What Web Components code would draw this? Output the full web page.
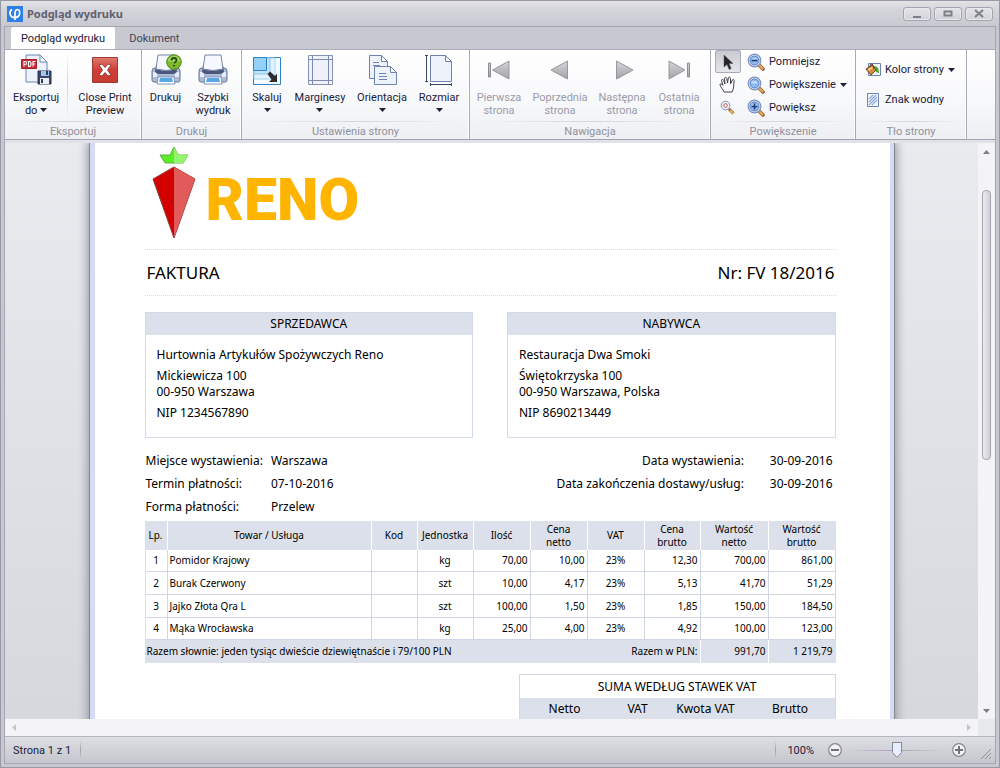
<!DOCTYPE html>
<html lang="pl">
<head>
<meta charset="utf-8">
<title>Podgląd wydruku</title>
<style>
html, body { margin: 0; height: 100%; }
body { font: 11px/13px Roboto, "Noto Sans", sans-serif; color: #20203a; }
</style>
</head>
<body>
<preview-window></preview-window>

<script>
const define = (name, html, setup) => {
  const template = document.createElement('template');
  template.innerHTML = html;
  customElements.define(name, class extends HTMLElement {
    connectedCallback() {
      if (this.shadowRoot) return;
      this.attachShadow({ mode: 'open' }).append(template.content.cloneNode(true));
      if (setup) setup(this, this.shadowRoot);
    }
  });
};

const page = 'fill="#eef2fb" stroke="#6d83b5"';
const lens = sign => `<svg width="18" height="18" viewBox="0 0 18 18"><path d="M11 11l5 5" stroke="#8a5a3c" stroke-width="3.6" stroke-linecap="round"/><path d="M12.5 12.500l3 3" stroke="#f0a64c" stroke-width="2.200" stroke-linecap="round"/><circle cx="7.500" cy="7.500" r="6.300" fill="#dbe6f6" stroke="#7c93c0" stroke-width="1.200"/><circle cx="7.500" cy="7.500" r="4.500" fill="#8fb8ee" stroke="#5e83c4"/><path d="M4 7a4 4 0 0 1 7 0q-3 1-7 0z" fill="#c5dcf8"/>${sign}</svg>`;
const printer = `<path d="M2 17q0-3 3-3h22q3 0 3 3v9q0 2-2 2H4q-2 0-2-2z" fill="#aebbd4" stroke="#66759a"/><path d="M3 18h4v5H3zM25 18h4v5h-4z" fill="#e7edf8"/><path d="M6 11h20l1 7q-2 2-4 2H9q-2 0-4-2z" fill="#4b587c"/><path d="M8 1h16l2 14q-10 3-20 0z" fill="#f5f8fe" stroke="#7585ab"/><path d="M8 23h16l1 7H7z" fill="#fff" stroke="#7c93c0"/><path d="M10 24h12l1 4H9z" fill="#58a8e4"/>`;
const big = body => `<svg width="32" height="32" viewBox="0 0 32 32">${body}</svg>`;
const metal = '<defs><linearGradient id="m" x2="0" y2="1"><stop stop-color="#d6d6d9"/><stop offset="1" stop-color="#a2a2a7"/></linearGradient></defs>';
const icons = {
  app: '<svg width="16" height="16" viewBox="0 0 16 16"><path d="M0 0h16v16H0z" fill="#2d7fe6"/><path d="M5 3.500C1.500 5.500 2.500 11.500 8 11.500s6-8 2.500-8c-2 0-2.500 2-2.500 4.500v6" fill="none" stroke="#fff" stroke-width="1.700"/></svg>',
  export: big(`<path d="M6 1h14l7 7v20H6z" ${page}/><path d="M20 1v7h7z" fill="#fff" stroke="#6d83b5"/><path d="M1.500 5.500h15v9h-15z" fill="#c9303a" stroke="#a51f2a"/><path d="M4 12.500v-5h1.500q1 0 1 1.500t-1 1.500H4M8.500 7.500v5h1q1.500 0 1.500-2.500T9.500 7.500zM13 12.500v-5h2.500M13 10h2" fill="none" stroke="#fff" stroke-width="1.100"/><path d="M18 17h13v13H18z" fill="#3d4763" stroke="#2b3450"/><path d="M21 17h8v5h-8z" fill="#9fc7ef"/><path d="M20 24h9v6h-9z" fill="#edf1f7"/><path d="M21 25h2v4h-2z" fill="#333d58"/><path d="M26 17h2v4h-2z" fill="#333d58"/>`),
  close: big('<defs><linearGradient id="r" x2="0" y2="1"><stop stop-color="#e07a6e"/><stop offset=".5" stop-color="#cf3f35"/><stop offset="1" stop-color="#c73c33"/></linearGradient></defs><path d="M3.500 3.500h25v25h-25z" fill="url(#r)" stroke="#a03a36"/><path d="M10 11l3-1 3 3.500 3-3.500 3 1-3.500 5 3.500 5-3 1-3-3.500-3 3.500-3-1 3.500-5z" fill="#fff" stroke="#8c2522" stroke-width=".8"/>'),
  printAsk: big(printer + '<circle cx="24" cy="8" r="7.300" fill="#7cba2a" stroke="#4d8a1e"/><path d="M18 7a6 5 0 0 1 12 0q-6 2-12 0z" fill="#a9d65f"/><path d="M21.500 6.500q0-2.500 2.500-2.500t2.500 2.200q0 1.300-2.500 2.800M24 11v1.500" fill="none" stroke="#234d10" stroke-width="1.800"/>'),
  print: big(printer),
  scale: big('<path d="M2.500 3.500h27v27h-27z" fill="#f2faff" stroke="#2d83c4"/><path d="M3 4h21v21H3z" fill="#e2f3fd" stroke="#a5d4f0"/><path d="M3 4h16v16H3z" fill="#bfe3fa" stroke="#8cc6ec"/><path d="M2.500 3.500h13v13h-13z" fill="#93d0fa" stroke="#2d83c4"/><path d="M16.500 20l2.500-2.500 5 4.500 2-2.500V28h-8l2.500-2.500z" fill="#2c2c31"/>'),
  margins: big('<path d="M4.500 1.500h24v29h-24z" fill="#eef1f8" stroke="#8793b4"/><path d="M8.500 1v30M24.500 1v30M4 5.500h25M4 26.500h25" fill="none" stroke="#7d8bb0"/>'),
  orient: big(`<path d="M3.500 1.500h12l6 6v17h-18z" ${page}/><path d="M15.500 1.500v6h6z" fill="#fff" stroke="#6d83b5"/><path d="M7 8.500h6M7 11.500h7" stroke="#6d83b5"/><path d="M8.500 12.500h16l6 6v12h-22z" ${page}/><path d="M24.500 12.500v6h6z" fill="#fff" stroke="#6d83b5"/><path d="M13 19.500h7M13 22.500h8M13 25.500h8" stroke="#6d83b5"/>`),
  size: big(`<path d="M7.500 1.500h15l6 6v20h-21z" ${page}/><path d="M22.500 1.500v6h6z" fill="#fff" stroke="#6d83b5"/><path d="M3.500 1v27M2 1.500h3M2 27.500h3M7 30.500h22M7.500 29v3M28.500 29v3" stroke="#3f4660" fill="none"/>`),
  first: big(metal + '<path d="M5.500 9h2v14h-2z" fill="url(#m)" stroke="#8e8e94"/><path d="M26 7v18L9.500 16z" fill="url(#m)" stroke="#96969c"/>'),
  prev: big(metal + '<path d="M23.500 7v18L7 16z" fill="url(#m)" stroke="#96969c"/>'),
  next: big(metal + '<path d="M10.500 7v18L27 16z" fill="url(#m)" stroke="#96969c"/>'),
  last: big(metal + '<path d="M6 7v18l16-9z" fill="url(#m)" stroke="#96969c"/><path d="M24.500 9h2v14h-2z" fill="url(#m)" stroke="#8e8e94"/>'),
  pointer: '<svg width="18" height="18" viewBox="0 0 18 18"><path d="M5 2v12l3-2.500 2.200 5 2-1L10 10.500h4z" fill="#26262a" stroke="#55555a" stroke-width=".5"/></svg>',
  hand: '<svg width="18" height="18" viewBox="0 0 18 18"><path d="M5 16c0-2-4-5-4-7.500 0-1 1.500-1 3 1L2.500 4.500c0-1.500 1.700-1.500 2.200 0L6 8 5.500 2.500c0-1.500 2-1.500 2.300 0L8.500 7l.8-5c.3-1.500 2.200-1 2.200.5L11.500 8l1.800-4c.6-1.200 2.200-.5 1.900.8C14.500 9 15 13 13 16z" fill="#fff" stroke="#3e3e44"/></svg>',
  magnify: '<svg width="18" height="18" viewBox="0 0 18 18"><path d="M10 10l4.500 4.500" stroke="#7c5a4a" stroke-width="3"/><path d="M11 11l3.500 3.500" stroke="#f2ae4e" stroke-width="2"/><circle cx="6.500" cy="6.500" r="4.300" fill="#eef4fc" stroke="#7c93c0"/><circle cx="6.500" cy="6.500" r="1.800" fill="#fff" stroke="#c94b45"/></svg>',
  zoomOut: lens('<path d="M4.500 7.500h6" stroke="#1d3a78" stroke-width="1.600"/>'),
  zoom: lens(''),
  zoomIn: lens('<path d="M4.500 7.500h6M7.500 4.500v6" stroke="#1d3a78" stroke-width="1.600"/>'),
  fill: '<svg width="16" height="16" viewBox="0 0 16 16"><path d="M3.500 1.500h12v12h-12z" fill="#f2f6fd" stroke="#6d83b5"/><path d="M9 4q5 0 5 7l-3-1q0-3-2-4z" fill="#55a52c"/><path d="M1 7l6-4 4 5-5 5z" fill="#d88b3c" stroke="#74431f"/><path d="M3 7l4-2 1 1-4 3z" fill="#f7cf95"/><path d="M5 5q0-4 2-3t2 5" fill="none" stroke="#5a4030"/></svg>',
  watermark: '<svg width="16" height="16" viewBox="0 0 16 16"><path d="M2.500 1.500h11v13h-11z" fill="#f2f6fd" stroke="#6d83b5"/><path d="M4 7l4-4M4 10l7-7M4 13l8-8M7 13l5-5" stroke="#8fa9d6" stroke-width="1.200"/></svg>',
  min: '<svg width="12" height="10" viewBox="0 0 12 10"><path d="M2 7h8v2H2z" fill="#7e8089"/></svg>',
  max: '<svg width="12" height="10" viewBox="0 0 12 10"><path d="M2.500 2.500h7v4h-7z" fill="none" stroke="#7e8089" stroke-width="2"/></svg>',
  x: '<svg width="12" height="10" viewBox="0 0 12 10"><path d="M2 1l8 7M10 1L2 8" stroke="#7e8089" stroke-width="2.200"/></svg>',
  minus: '<svg width="14" height="14" viewBox="0 0 14 14"><circle cx="7" cy="7" r="6.300" fill="#f4f4f6" stroke="#83848e" stroke-width="1.200"/><path d="M3 7h8" stroke="#6f707b" stroke-width="2"/></svg>',
  plus: '<svg width="14" height="14" viewBox="0 0 14 14"><circle cx="7" cy="7" r="6.300" fill="#f4f4f6" stroke="#83848e" stroke-width="1.200"/><path d="M3 7h8M7 3v8" stroke="#6f707b" stroke-width="2"/></svg>',
  grip: '<svg width="12" height="12" viewBox="0 0 12 12"><path d="M1 11L11 1M5 11l6-6M9 11l2-2" stroke="#8f909b"/></svg>',
  drop: '<svg width="7" height="4" viewBox="0 0 7 4"><path d="M0 0h7L3.500 4z" fill="#20203a"/></svg>',
  up: '<svg width="7" height="4" viewBox="0 0 7 4"><path d="M0 4h7L3.500 0z" fill="#7b7d88"/></svg>',
  down: '<svg width="7" height="4" viewBox="0 0 7 4"><path d="M0 0h7L3.500 4z" fill="#7b7d88"/></svg>',
  left: '<svg width="4" height="7" viewBox="0 0 4 7"><path d="M4 0v7L0 3.500z" fill="#c4c5ca"/></svg>',
  right: '<svg width="4" height="7" viewBox="0 0 4 7"><path d="M0 0v7l4-3.500z" fill="#c4c5ca"/></svg>',
  carrot: '<svg width="44" height="94" viewBox="0 0 44 94"><path d="M22 1l4 8h10l-5 8H13L8 9h10z" fill="#58ee22" stroke="#67a84a"/><path d="M22 1l4 8h10l-5 8h-9z" fill="#95f46e"/><path d="M22 21l21 12-21 59L1 33z" fill="#d40000" stroke="#8f3a3a"/><path d="M22 21l21 12-21 59z" fill="#e25b5b"/></svg>'
};

define('app-icon', `<style>:host{display:inline-flex;flex:none} svg{display:block}</style>`,
  (host, root) => root.lastElementChild.insertAdjacentHTML('afterend', icons[host.getAttribute('name')]));

define('caption-button', `<style>
  :host{display:block}
  button{display:grid;place-items:center;width:28px;height:14px;padding:0;box-sizing:border-box;border:1px solid #a3a4ae;border-radius:3px;background:linear-gradient(#e4e4e8,#d0d1d7);box-shadow:inset 0 0 0 1px #e8e8ec}
</style><button><app-icon></app-icon></button>`, (host, root) => {
  root.querySelector('button').setAttribute('aria-label', host.getAttribute('label'));
  root.querySelector('app-icon').replaceWith(Object.assign(document.createElement('template'), { innerHTML: `<app-icon name="${host.getAttribute('icon')}"></app-icon>` }).content);
});

define('ribbon-tab', `<style>
  :host{display:block}
  button{height:22px;padding:0 10px;border:0;background:none;font:inherit;color:#45465a}
  :host([selected]) button{background:#fff;color:#20203a;border-radius:2px 2px 0 0}
</style><button role="tab"><slot></slot></button>`);

define('ribbon-group', `<style>
  :host{display:flex;flex-direction:column;box-sizing:border-box;border-right:1px solid #a9abb8;box-shadow:inset -1px 0 #fff}
  .items{flex:1;display:flex}
  .caption{height:17px;line-height:19px;text-align:center;color:#8f909c;border-top:1px solid;border-image:linear-gradient(90deg,transparent 5%,#d3d5dc 50%,transparent 95%) 1}
</style><div class="items"><slot></slot></div><div class="caption"></div>`,
  (host, root) => root.querySelector('.caption').textContent = host.getAttribute('caption'));

define('ribbon-button', `<style>
  :host{display:block;width:var(--w,56px)}
  button{display:flex;flex-direction:column;align-items:center;gap:5px;width:100%;padding:4px 0 0;border:0;background:none;font:inherit;color:inherit;white-space:nowrap}
  button:disabled{color:#9a9ba9}
</style><button><slot name="icon"></slot><span><slot></slot></span></button>`,
  (host, root) => root.querySelector('button').disabled = host.hasAttribute('disabled'));

define('ribbon-row', `<style>
  :host{display:block}
  button{display:flex;align-items:center;gap:4px;height:23px;padding:0;border:0;background:none;font:inherit;color:inherit;white-space:nowrap}
</style><button><slot name="icon"></slot><span><slot></slot></span><slot name="end"></slot></button>`);

define('tool-button', `<style>
  :host{display:block}
  button{display:grid;place-items:center;width:26px;height:23px;box-sizing:border-box;padding:0;border:1px solid transparent;border-radius:2px;background:none}
  :host([pressed]) button{border-color:#a9abb8;background:linear-gradient(#c9cad1,#e6e7ec)}
</style><button><slot></slot></button>`, (host, root) => root.querySelector('button').setAttribute('aria-label', host.getAttribute('label')));

define('print-ribbon', `<style>
  :host{display:block}
  .tabs{display:flex;align-items:flex-end;height:23px;padding-left:6px;gap:4px;background:#c8c8d1;border-top:1px solid #a5a6b2;box-sizing:border-box}
  .bar{display:flex;height:91px;box-sizing:border-box;border-top:1px solid #a9abb8;border-bottom:1px solid #a1a3b1;background:linear-gradient(#fff,#f7f8fa 60%,#eeeff2);overflow:hidden}
  ribbon-group{flex:none}
  .sep{width:1px;height:68px;margin:2px 1px 0 0;background:linear-gradient(transparent,#d0d2da,transparent)}
  .tools{display:grid;align-content:start;padding:0 6px 0 4px}
  .rows{display:grid;align-content:start;padding:0 12px 0 0;gap:0}
  .rows.wide{padding:8px 12px 0 9px;gap:7px}
  .rest{padding-right:4px}
  app-icon[name=drop]{vertical-align:2px}
</style>
<div class="tabs" role="tablist"><ribbon-tab selected>Podgląd wydruku</ribbon-tab><ribbon-tab>Dokument</ribbon-tab></div>
<div class="bar">
  <ribbon-group caption="Eksportuj">
    <ribbon-button style="--w:62px"><app-icon slot="icon" name="export"></app-icon>Eksportuj<br>do <app-icon name="drop"></app-icon></ribbon-button>
    <div class="sep"></div>
    <ribbon-button style="--w:72px"><app-icon slot="icon" name="close"></app-icon>Close Print<br>Preview</ribbon-button>
  </ribbon-group>
  <ribbon-group caption="Drukuj">
    <ribbon-button style="--w:47px"><app-icon slot="icon" name="printAsk"></app-icon>Drukuj</ribbon-button>
    <ribbon-button class="rest" style="--w:48px"><app-icon slot="icon" name="print"></app-icon>Szybki<br>wydruk</ribbon-button>
  </ribbon-group>
  <ribbon-group caption="Ustawienia strony">
    <ribbon-button style="--w:50px"><app-icon slot="icon" name="scale"></app-icon>Skaluj<br><app-icon name="drop"></app-icon></ribbon-button>
    <ribbon-button style="--w:56px"><app-icon slot="icon" name="margins"></app-icon>Marginesy<br><app-icon name="drop"></app-icon></ribbon-button>
    <ribbon-button style="--w:68px"><app-icon slot="icon" name="orient"></app-icon>Orientacja<br><app-icon name="drop"></app-icon></ribbon-button>
    <ribbon-button style="--w:46px;padding-right:7px"><app-icon slot="icon" name="size"></app-icon>Rozmiar<br><app-icon name="drop"></app-icon></ribbon-button>
  </ribbon-group>
  <ribbon-group caption="Nawigacja">
    <ribbon-button disabled style="--w:58px"><app-icon slot="icon" name="first"></app-icon>Pierwsza<br>strona</ribbon-button>
    <ribbon-button disabled style="--w:64px"><app-icon slot="icon" name="prev"></app-icon>Poprzednia<br>strona</ribbon-button>
    <ribbon-button disabled style="--w:60px"><app-icon slot="icon" name="next"></app-icon>Następna<br>strona</ribbon-button>
    <ribbon-button class="rest" disabled style="--w:54px"><app-icon slot="icon" name="last"></app-icon>Ostatnia<br>strona</ribbon-button>
  </ribbon-group>
  <ribbon-group caption="Powiększenie" style="width:145px">
    <div class="tools">
      <tool-button pressed label="Wskaźnik"><app-icon name="pointer"></app-icon></tool-button>
      <tool-button label="Rączka"><app-icon name="hand"></app-icon></tool-button>
      <tool-button label="Lupa"><app-icon name="magnify"></app-icon></tool-button>
    </div>
    <div class="rows">
      <ribbon-row><app-icon slot="icon" name="zoomOut"></app-icon>Pomniejsz</ribbon-row>
      <ribbon-row><app-icon slot="icon" name="zoom"></app-icon>Powiększenie<app-icon slot="end" name="drop"></app-icon></ribbon-row>
      <ribbon-row><app-icon slot="icon" name="zoomIn"></app-icon>Powiększ</ribbon-row>
    </div>
  </ribbon-group>
  <ribbon-group caption="Tło strony" style="width:111px">
    <div class="rows wide">
      <ribbon-row><app-icon slot="icon" name="fill"></app-icon>Kolor strony<app-icon slot="end" name="drop"></app-icon></ribbon-row>
      <ribbon-row><app-icon slot="icon" name="watermark"></app-icon>Znak wodny</ribbon-row>
    </div>
  </ribbon-group>
</div>`);

define('party-card', `<style>
  :host{display:block;flex:1;box-sizing:border-box;height:126px;border:1px solid #d2d9e8}
  h2{margin:0;height:22px;font:inherit;line-height:22px;text-align:center;background:#dce0ea}
  div{padding:12px 11px 0;line-height:16px}
  ::slotted(p){margin:0 0 5px}
</style><h2></h2><div><slot></slot></div>`,
  (host, root) => root.querySelector('h2').textContent = host.getAttribute('heading'));

define('invoice-items', `<style>
  :host{display:block;font-size:10px;line-height:13px}
  table{width:100%;table-layout:fixed;border-collapse:separate;border-spacing:0}
  th,td{box-sizing:border-box;padding:0 2px;font-weight:400;border-right:1px solid #cfd6e6;white-space:nowrap}
  th{height:29px;background:#dce0ea;border-right-color:#fff;padding:0}
  tbody td{height:23px;border-bottom:1px solid #cfd6e6;text-align:right}
  tbody tr:first-child td,tbody tr:last-child td{height:22px}
  tbody td:first-child{border-left:1px solid #dce0ea}
  td.c{text-align:center} td.l{text-align:left}
  tfoot td{height:23px;background:#dce0ea;border-right-color:#fff;text-align:right}
  tfoot td.l{border-right:0}
  th:last-child,tfoot td:last-child{border-right-color:#dce0ea}
</style>
<table>
<colgroup><col style="width:23px"><col style="width:204px"><col style="width:46px"><col style="width:56px"><col style="width:57px"><col style="width:57px"><col style="width:57px"><col style="width:56px"><col style="width:68px"><col style="width:67px"></colgroup>
<thead><tr><th>Lp.</th><th>Towar / Usługa</th><th>Kod</th><th>Jednostka</th><th>Ilość</th><th>Cena<br>netto</th><th>VAT</th><th>Cena<br>brutto</th><th>Wartość<br>netto</th><th>Wartość<br>brutto</th></tr></thead>
<tbody></tbody>
<tfoot><tr><td class="l" colspan="5">Razem słownie: jeden tysiąc dwieście dziewiętnaście i 79/100 PLN</td><td colspan="3">Razem w PLN:</td><td>991,70</td><td>1 219,79</td></tr></tfoot>
</table>`, (host, root) => {
  const kinds = ['c', 'l', 'c', 'c', '', '', 'c', '', '', ''];
  root.querySelector('tbody').innerHTML = [
    ['1', 'Pomidor Krajowy', '', 'kg', '70,00', '10,00', '23%', '12,30', '700,00', '861,00'],
    ['2', 'Burak Czerwony', '', 'szt', '10,00', '4,17', '23%', '5,13', '41,70', '51,29'],
    ['3', 'Jajko Złota Qra L', '', 'szt', '100,00', '1,50', '23%', '1,85', '150,00', '184,50'],
    ['4', 'Mąka Wrocławska', '', 'kg', '25,00', '4,00', '23%', '4,92', '100,00', '123,00']
  ].map(row => `<tr>${row.map((v, i) => `<td class="${kinds[i]}">${v}</td>`).join('')}</tr>`).join('');
});

define('vat-summary', `<style>
  :host{display:block;width:317px;margin-left:auto}
  table{width:100%;table-layout:fixed;border-spacing:0;border:solid #cfd6e6;border-width:0 1px 1px}
  caption{box-sizing:border-box;height:24px;line-height:24px;border:1px solid #cfd6e6;border-bottom:0}
  th{height:22px;padding:0;font-weight:400;background:#dce0ea}
</style><table><caption>SUMA WEDŁUG STAWEK VAT</caption><colgroup><col style="width:90px"><col style="width:56px"><col style="width:80px"><col style="width:89px"></colgroup>
<tr><th>Netto</th><th>VAT</th><th>Kwota VAT</th><th>Brutto</th></tr></table>`);

define('invoice-page', `<style>
  :host{display:block;box-sizing:border-box;width:100%;max-width:804px;height:1000px;margin:0 auto;padding:3px 54px 0 50px;background:#fff;border:solid #d4dbf6;border-width:0 4px 0 5px;font-family:"Noto Sans","Open Sans",sans-serif;font-size:12px;line-height:16px;color:#000;box-shadow:0 0 0 1px #85868f,0 0 10px 2px #8e8f98}
  .logo{display:flex;align-items:center;gap:10px;height:103px;box-sizing:border-box;padding:0 0 9px 7px}
  .logo b{font:900 59px/60px Roboto,sans-serif;color:#ffb400;padding-top:14px}
  .title{display:flex;justify-content:space-between;align-items:center;height:47px;box-sizing:border-box;padding:0 1px 0 2px;border:dotted #d3d8e8;border-width:1px 0;font-size:17px}
  .parties{display:flex;gap:34px;margin-top:16px}
  .facts{display:flex;justify-content:space-between;height:72px;margin:11px 0 0;padding:0 3px 0 1px}
  dl{display:grid;grid-template-columns:auto auto;grid-auto-rows:23px;line-height:23px;margin:0}
  .place{column-gap:8px}
  .dates{column-gap:26px}
  .dates dt{text-align:right}
  dd{margin:0}
  vat-summary{margin-top:11px}
</style>
<div class="logo"><app-icon name="carrot"></app-icon><b>RENO</b></div>
<div class="title"><span>FAKTURA</span><span>Nr: FV 18/2016</span></div>
<div class="parties">
  <party-card heading="SPRZEDAWCA"><p>Hurtownia Artykułów Spożywczych Reno</p><p>Mickiewicza 100<br>00-950 Warszawa</p><p>NIP 1234567890</p></party-card>
  <party-card heading="NABYWCA"><p>Restauracja Dwa Smoki</p><p>Świętokrzyska 100<br>00-950 Warszawa, Polska</p><p>NIP 8690213449</p></party-card>
</div>
<div class="facts">
  <dl class="place"><dt>Miejsce wystawienia:</dt><dd>Warszawa</dd><dt>Termin płatności:</dt><dd>07-10-2016</dd><dt>Forma płatności:</dt><dd>Przelew</dd></dl>
  <dl class="dates"><dt>Data wystawienia:</dt><dd>30-09-2016</dd><dt>Data zakończenia dostawy/usług:</dt><dd>30-09-2016</dd></dl>
</div>
<invoice-items></invoice-items>
<vat-summary></vat-summary>`);

define('document-view', `<style>
  :host{flex:1;min-height:0;display:grid;grid-template:minmax(0,1fr) 17px / minmax(0,1fr) 17px;border-top:3px solid #e1e2e7;background:#e8e9ed}
  .canvas{overflow:hidden;background:linear-gradient(#eaebef,#d7d8de)}
  .v{display:flex;flex-direction:column;align-items:center;background:#f4f4f6;padding:7px 0 6px;box-sizing:border-box}
  .track{flex:1;min-height:0;width:9px;padding:36px 0 0;box-sizing:border-box}
  .thumb{height:52%;box-sizing:border-box;border:1px solid #a4a5ae;border-radius:4px;background:linear-gradient(90deg,#ececf0,#cfd0d6)}
  .h{display:flex;justify-content:space-between;align-items:center;padding:0 7px;background:#f4f4f6}
</style><div class="canvas"><slot></slot></div>
<div class="v"><app-icon name="up"></app-icon><div class="track"><div class="thumb"></div></div><app-icon name="down"></app-icon></div>
<div class="h"><app-icon name="left"></app-icon><app-icon name="right"></app-icon></div>`);

define('status-bar', `<style>
  :host{display:flex;align-items:center;height:27px;box-sizing:border-box;border-top:1px solid #b4b5bf;background:linear-gradient(#dddee3,#c6c7ce);padding:0 3px 0 8px}
  .sep{width:1px;height:18px;background:linear-gradient(transparent,#9c9da7,transparent)}
  .page{padding-right:9px}
  .zoom{display:flex;align-items:center;margin-left:auto}
  label{padding:0 14px 0 11px}
  button{padding:0;border:0;background:none;display:flex}
  input{-webkit-appearance:none;appearance:none;width:97px;height:18px;margin:0 7px 0 6px;background:linear-gradient(90deg,transparent,#b79fd0 40%,#a7a8b2 55%,transparent) center/100% 1px no-repeat}
  input::-webkit-slider-thumb{-webkit-appearance:none;width:12px;height:18px;background:url("data:image/svg+xml,%3Csvg xmlns='http://www.w3.org/2000/svg' width='12' height='18'%3E%3Cpath d='M1.5 1.500h9v10L6 16.500l-4.500-5z' fill='%23e6eeff' stroke='%23858794'/%3E%3C/svg%3E")}
  .grip{align-self:flex-end;margin:0 0 3px 14px}
</style><span class="page">Strona 1 z 1</span><span class="sep"></span>
<div class="zoom"><span class="sep"></span><label for="z">100%</label><button aria-label="Pomniejsz"><app-icon name="minus"></app-icon></button><input id="z" type="range" min="0" max="200" value="100"><button aria-label="Powiększ"><app-icon name="plus"></app-icon></button></div><app-icon class="grip" name="grip"></app-icon>`);

define('preview-window', `<style>
  :host{display:flex;flex-direction:column;box-sizing:border-box;height:100vh;padding:0 3px 3px;border:1px solid #9899a6;background:#c8c8d1;cursor:default}
  header{display:flex;align-items:center;gap:4px;height:25px;padding:0 2px 0 3px;margin:0 -3px;background:linear-gradient(#e3e3e7,#d6d7dc 30%,#c8c8d1)}
  h1{flex:1;margin:0;font:inherit;font-family:"Noto Sans",sans-serif;font-weight:700;color:#60616f}
  .buttons{display:flex;gap:3px;padding-right:4px}
  header app-icon{padding-left:3px}
  main{flex:1;min-height:0;display:flex;flex-direction:column;border:1px solid #a5a6b2;border-top:0}
</style>
<header><app-icon name="app"></app-icon><h1>Podgląd wydruku</h1><div class="buttons"><caption-button icon="min" label="Minimalizuj"></caption-button><caption-button icon="max" label="Maksymalizuj"></caption-button><caption-button icon="x" label="Zamknij"></caption-button></div></header>
<main><print-ribbon></print-ribbon><document-view><invoice-page></invoice-page></document-view><status-bar></status-bar></main>`);
</script>
</body>
</html>
